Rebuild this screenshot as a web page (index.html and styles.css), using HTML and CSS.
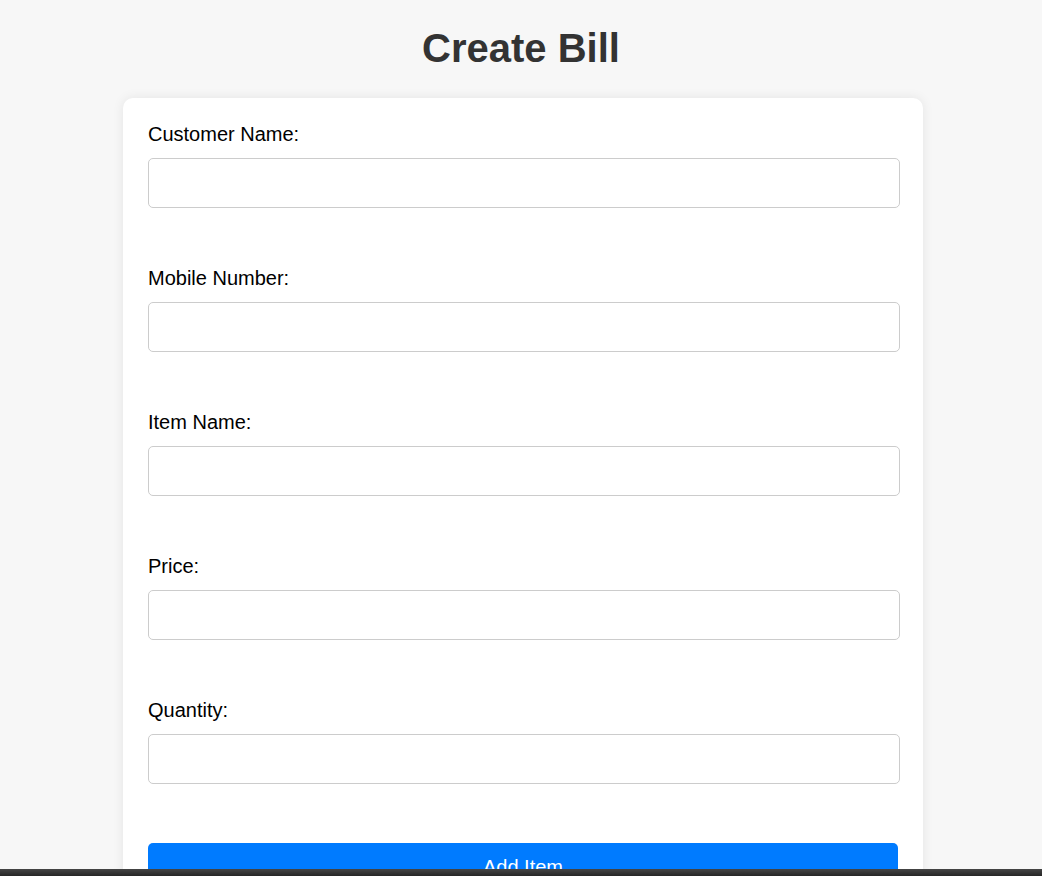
FILE: index.html
```html
<!DOCTYPE html>
<html lang="en">
<head>
<meta charset="utf-8">
<title>Create Bill</title>
<link rel="stylesheet" href="styles.css">
</head>
<body>
<main class="page">
  <h1 class="title">Create Bill</h1>
  <form class="card">
    <label class="label" for="cname">Customer Name:</label>
    <input class="field" id="cname" type="text">
    <label class="label" for="mobile">Mobile Number:</label>
    <input class="field" id="mobile" type="text">
    <label class="label" for="item">Item Name:</label>
    <input class="field" id="item" type="text">
    <label class="label" for="price">Price:</label>
    <input class="field" id="price" type="text">
    <label class="label" for="qty">Quantity:</label>
    <input class="field" id="qty" type="text">
    <button class="btn" type="button">Add Item</button>
  </form>
</main>
<div class="bottom-bar"></div>
</body>
</html>
```

FILE: styles.css
```css
html, body {
  margin: 0;
  padding: 0;
  background: #f7f7f7;
  font-family: "Liberation Sans", Arial, sans-serif;
}

.page {
  display: flex;
  flex-direction: column;
  align-items: center;
  padding-top: 25px;
}

.title {
  margin: 0 0 27px;
  font-size: 40px;
  line-height: 46px;
  font-weight: bold;
  color: #333;
}

.card {
  box-sizing: border-box;
  width: 800px;
  margin-left: 4px;
  padding: 25px 25px 40px;
  background: #fff;
  border-radius: 10px;
  box-shadow: 0 0 12px rgba(0, 0, 0, 0.08);
  display: flex;
  flex-direction: column;
  align-items: flex-start;
}

.label {
  display: block;
  font-size: 20px;
  line-height: 23px;
  color: #000;
  margin-bottom: 12px;
}

.field {
  display: block;
  box-sizing: border-box;
  width: 752px;
  height: 50px;
  margin: 0 0 59px;
  padding: 10px 12px;
  border: 1px solid #ccc;
  border-radius: 5px;
  font-size: 20px;
  font-family: inherit;
  background: #fff;
}

.btn {
  width: 750px;
  height: 48px;
  border: none;
  border-radius: 5px;
  background: #007bff;
  color: #fff;
  font-family: inherit;
  font-size: 20px;
}

.bottom-bar {
  position: fixed;
  left: 0;
  right: 0;
  bottom: 0;
  height: 7px;
  background: linear-gradient(#454545, #262626);
}
```
